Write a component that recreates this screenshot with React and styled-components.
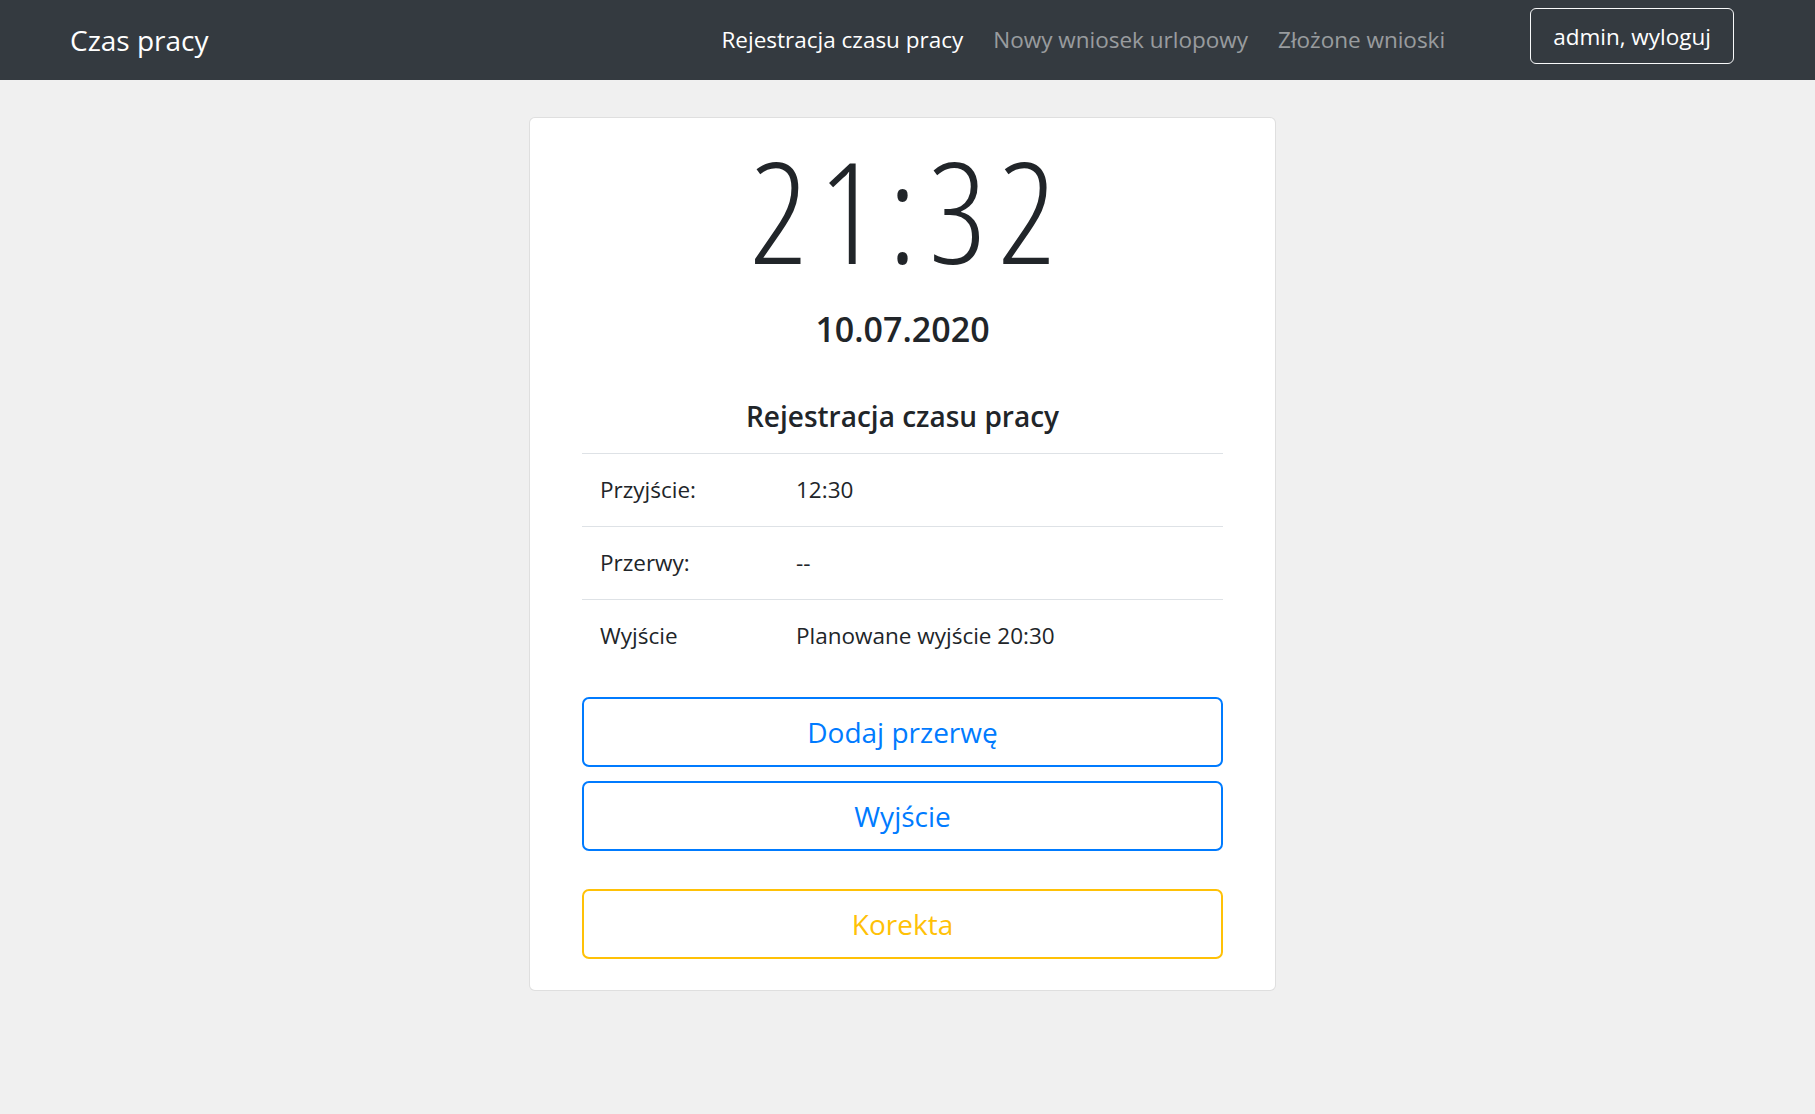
import React from "react";
import styled, { createGlobalStyle } from "styled-components";

const GlobalStyle = createGlobalStyle`
  html, body {
    margin: 0;
    padding: 0;
    background: #f0f0f0;
    font-family: "Open Sans", "Noto Sans", "Liberation Sans", sans-serif;
    color: #212529;
  }
  * { box-sizing: border-box; }
`;

const Navbar = styled.nav`
  height: 80px;
  background: #343a40;
  display: flex;
  align-items: center;
  padding: 0 81px 0 70px;
`;

const Brand = styled.a`
  font-size: 28px;
  color: #fff;
  text-decoration: none;
  line-height: 1.5;
`;

const NavList = styled.ul`
  display: flex;
  list-style: none;
  margin: 0 0 0 auto;
  padding: 0;
`;

const NavLink = styled.a`
  display: block;
  padding: 0 15px;
  font-size: 22.5px;
  line-height: 1.5;
  text-decoration: none;
  color: ${(p) => (p.$active ? "#fff" : "rgba(255,255,255,.5)")};
`;

const LogoutButton = styled.button`
  align-self: flex-start;
  margin: 8px 0 0 70px;
  height: 56px;
  padding: 0 22px;
  background: transparent;
  border: 1.5px solid #f8f9fa;
  border-radius: 6px;
  color: #fff;
  font-family: inherit;
  font-size: 22.5px;
`;

const Main = styled.main`
  padding: 37px 10px 0 0;
`;

const Card = styled.section`
  width: 747px;
  margin: 0 auto;
  background: #fff;
  border: 1px solid rgba(0, 0, 0, 0.125);
  border-radius: 6px;
  padding: 7px 52px 31px;
  display: flex;
  flex-direction: column;
`;

const Clock = styled.div`
  font-size: 141px;
  font-weight: 300;
  font-stretch: 85%;
  letter-spacing: 12px;
  padding-left: 12px;
  line-height: 1.2;
  text-align: center;
`;

const DateText = styled.div`
  font-size: 34px;
  font-weight: 600;
  line-height: 1.2;
  text-align: center;
  margin-top: 15px;
`;

const Heading = styled.h5`
  font-size: 28px;
  font-weight: 600;
  line-height: 1.2;
  text-align: center;
  margin: 50px 0 19px;
`;

const Table = styled.div`
  display: flex;
  flex-direction: column;
`;

const Row = styled.div`
  display: grid;
  grid-template-columns: 196px 1fr;
  border-top: 1px solid #dee2e6;
`;

const Cell = styled.div`
  padding: 18px;
  font-size: 22.5px;
  line-height: 36px;
`;

const Buttons = styled.div`
  display: flex;
  flex-direction: column;
  gap: 14px;
  margin-top: 25px;
`;

const OutlineButton = styled.button`
  height: 70px;
  width: 100%;
  background: #fff;
  border: 2px solid ${(p) => p.$color};
  border-radius: 7px;
  color: ${(p) => p.$color};
  font-family: inherit;
  font-size: 28px;
  margin-top: ${(p) => (p.$spaced ? "24px" : "0")};
`;

const rows = [
  ["Przyjście:", "12:30"],
  ["Przerwy:", "--"],
  ["Wyjście", "Planowane wyjście 20:30"],
];

export default function App() {
  return (
    <>
      <GlobalStyle />
      <Navbar>
        <Brand href="#">Czas pracy</Brand>
        <NavList>
          <li><NavLink href="#" $active>Rejestracja czasu pracy</NavLink></li>
          <li><NavLink href="#">Nowy wniosek urlopowy</NavLink></li>
          <li><NavLink href="#">Złożone wnioski</NavLink></li>
        </NavList>
        <LogoutButton>admin, wyloguj</LogoutButton>
      </Navbar>
      <Main>
        <Card>
          <Clock>21:32</Clock>
          <DateText>10.07.2020</DateText>
          <Heading>Rejestracja czasu pracy</Heading>
          <Table>
            {rows.map(([label, value]) => (
              <Row key={label}>
                <Cell>{label}</Cell>
                <Cell>{value}</Cell>
              </Row>
            ))}
          </Table>
          <Buttons>
            <OutlineButton $color="#007bff">Dodaj przerwę</OutlineButton>
            <OutlineButton $color="#007bff">Wyjście</OutlineButton>
            <OutlineButton $color="#ffc107" $spaced>Korekta</OutlineButton>
          </Buttons>
        </Card>
      </Main>
    </>
  );
}
